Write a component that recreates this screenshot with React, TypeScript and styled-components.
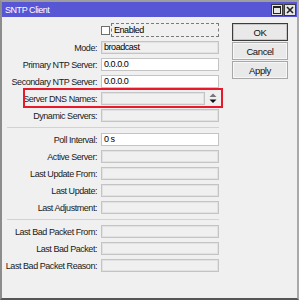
import React from "react";
import styled, { createGlobalStyle } from "styled-components";

const GlobalStyle = createGlobalStyle`
  html, body { margin: 0; padding: 0; background: #f0f0f0; }
  #root { width: 299px; height: 300px; }
`;

const FONT = `"Liberation Sans", Arial, sans-serif`;

const Window = styled.div`
  width: 299px;
  height: 300px;
  box-sizing: border-box;
  display: flex;
  flex-direction: column;
  background: #f0f0f0;
  border-left: 2px solid #8c8c8c;
  border-right: 2px solid #a9a9a9;
  border-top: 2px solid #9d9d9d;
  border-bottom: 2px solid #555555;
  font-family: ${FONT};
  font-size: 9px;
  letter-spacing: -0.45px;
  color: #000;
`;

const TitleBar = styled.div`
  height: 15px;
  background: #5757d6;
  display: flex;
  align-items: center;
  justify-content: space-between;
  padding: 0 1px 0 3px;
  color: #fff;
  font-size: 9px;
`;

const TitleButtons = styled.div`
  display: flex;
  gap: 1px;
`;

const TitleButton = styled.div`
  width: 10px;
  height: 10px;
  background: #e6e6e6;
  border: 1px solid #3a3a3a;
  display: flex;
  align-items: center;
  justify-content: center;
`;

const Body = styled.div`
  display: flex;
  gap: 13px;
  padding-top: 6px;
`;

const Form = styled.div`
  width: 217px;
  display: flex;
  flex-direction: column;
  gap: 4px;
`;

const Row = styled.div<{ $highlight?: boolean; $tall?: boolean }>`
  position: relative;
  display: flex;
  align-items: center;
  gap: 4px;
  height: ${(p) => (p.$tall ? 14 : 13)}px;
  ${(p) =>
    p.$highlight
      ? `&::after {
    content: "";
    position: absolute;
    left: 21px;
    right: -4px;
    top: -4px;
    bottom: -3px;
    border: 2px solid #e8192a;
    pointer-events: none;
  }`
      : ""}
`;

const Label = styled.div`
  width: 95px;
  flex: none;
  text-align: right;
  white-space: nowrap;
  color: #1a1a1a;
`;

const Field = styled.div<{ $editable?: boolean; $width?: number }>`
  width: ${(p) => p.$width ?? 118}px;
  height: 13px;
  flex: none;
  box-sizing: border-box;
  border: 1px solid #c4c4c4;
  box-shadow: inset 0 0 0 1px ${(p) => (p.$editable ? "#ffffff" : "#e2e2e2")};
  background: ${(p) => (p.$editable ? "#ffffff" : "#f0f0f0")};
  padding-left: 2px;
  line-height: 11px;
  white-space: nowrap;
  overflow: hidden;
`;

const FieldGroup = styled.div`
  display: flex;
  align-items: center;
  gap: 1px;
`;

const Spinner = styled.div`
  width: 13px;
  height: 13px;
  display: flex;
  align-items: center;
  justify-content: center;
`;

const Checkbox = styled.div`
  width: 9px;
  height: 9px;
  box-sizing: border-box;
  background: #fff;
  border: 1px solid #6e6e6e;
  flex: none;
`;

const CheckLabel = styled.div`
  width: 108px;
  height: 14px;
  box-sizing: border-box;
  border: 1px dashed #7a7a7a;
  padding-left: 2px;
  line-height: 12px;
  margin-left: 1px;
`;

const CheckGroup = styled.div`
  display: flex;
  align-items: center;
`;

const Separator = styled.div`
  height: 3px;
  margin-left: 5px;
  width: 212px;
  box-sizing: border-box;
  border-top: 1px solid #d2d2d2;
  position: relative;
  top: 1px;
`;

const Buttons = styled.div`
  width: 56px;
  display: flex;
  flex-direction: column;
  gap: 1px;
`;

const Button = styled.button<{ $default?: boolean }>`
  height: 18px;
  width: 56px;
  box-sizing: border-box;
  margin: 0;
  padding: 0;
  font-family: ${FONT};
  font-size: 9.5px;
  letter-spacing: -0.4px;
  color: #111;
  background: #e9e9e9;
  border: 1px solid ${(p) => (p.$default ? "#3c3c3c" : "#a8a8a8")};
  box-shadow: inset 0 0 0 1px ${(p) => (p.$default ? "#c8c8c8" : "#f6f6f6")};
`;

const MaxIcon = () => (
  <svg width="8" height="8" viewBox="0 0 8 8">
    <rect x="0.5" y="0.5" width="7" height="7" fill="none" stroke="#222" />
    <line x1="0" y1="1.5" x2="8" y2="1.5" stroke="#222" />
  </svg>
);

const CloseIcon = () => (
  <svg width="8" height="8" viewBox="0 0 8 8">
    <path d="M1 1 L7 7 M7 1 L1 7" stroke="#222" strokeWidth="1.6" />
  </svg>
);

const SpinIcon = () => (
  <svg width="8" height="11" viewBox="0 0 8 11">
    <polygon points="0.5,4 4,0.5 7.5,4" fill="#777" />
    <polygon points="0.5,6.5 7.5,6.5 4,10" fill="#111" />
  </svg>
);

type F = { label: string; value?: string; editable?: boolean };

const group1: F[] = [
  { label: "Mode:", value: "broadcast" },
  { label: "Primary NTP Server:", value: "0.0.0.0", editable: true },
  { label: "Secondary NTP Server:", value: "0.0.0.0", editable: true },
];

const group2: F[] = [
  { label: "Poll Interval:", value: "0 s", editable: true },
  { label: "Active Server:" },
  { label: "Last Update From:" },
  { label: "Last Update:" },
  { label: "Last Adjustment:" },
];

const group3: F[] = [
  { label: "Last Bad Packet From:" },
  { label: "Last Bad Packet:" },
  { label: "Last Bad Packet Reason:" },
];

const renderRow = (f: F) => (
  <Row key={f.label}>
    <Label>{f.label}</Label>
    <Field $editable={f.editable}>{f.value ?? ""}</Field>
  </Row>
);

export default function App() {
  return (
    <>
      <GlobalStyle />
      <Window>
        <TitleBar>
          <span>SNTP Client</span>
          <TitleButtons>
            <TitleButton>
              <MaxIcon />
            </TitleButton>
            <TitleButton>
              <CloseIcon />
            </TitleButton>
          </TitleButtons>
        </TitleBar>
        <Body>
          <Form>
            <Row $tall>
              <Label />
              <CheckGroup>
                <Checkbox />
                <CheckLabel>Enabled</CheckLabel>
              </CheckGroup>
            </Row>
            {group1.map(renderRow)}
            <Row $highlight>
              <Label>Server DNS Names:</Label>
              <FieldGroup>
                <Field $width={104} />
                <Spinner>
                  <SpinIcon />
                </Spinner>
              </FieldGroup>
            </Row>
            <Row>
              <Label>Dynamic Servers:</Label>
              <Field />
            </Row>
            <Separator />
            {group2.map(renderRow)}
            <Separator />
            {group3.map(renderRow)}
          </Form>
          <Buttons>
            <Button $default>OK</Button>
            <Button>Cancel</Button>
            <Button>Apply</Button>
          </Buttons>
        </Body>
      </Window>
    </>
  );
}
